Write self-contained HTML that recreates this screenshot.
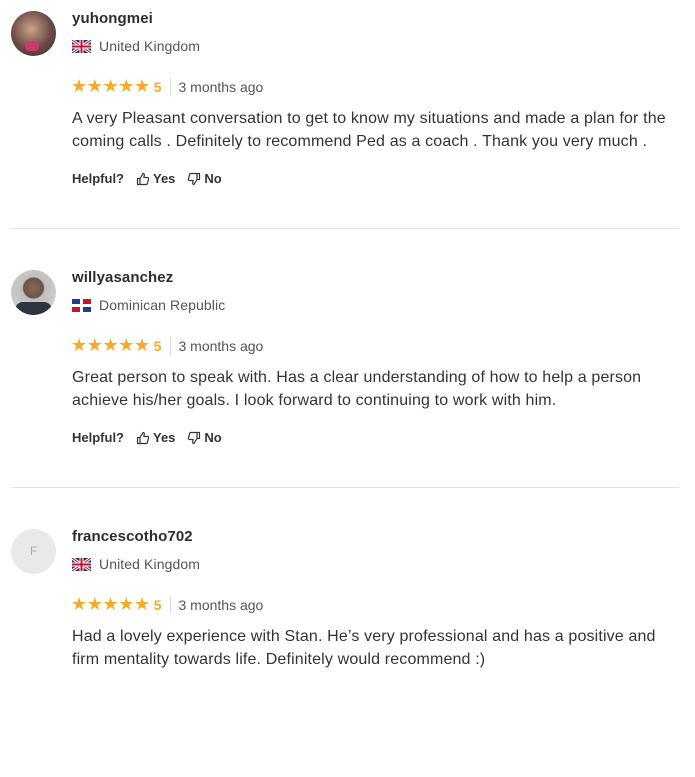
<!DOCTYPE html>
<html><head><meta charset="utf-8"><style>
body{margin:0;width:695px;height:677px;background:#fff;font-family:"Liberation Sans",Arial,sans-serif;color:#2d2d2d;overflow:hidden;position:relative}
.r{position:absolute;left:0;width:695px;height:259px}
.av{position:absolute;left:11px;top:11px;width:45px;height:45px;border-radius:50%;overflow:hidden}
.name{position:absolute;left:72px;top:10px;font-size:15px;font-weight:bold;color:#2d2d2d;letter-spacing:0.1px}
.ctry{position:absolute;left:72px;top:38px;font-size:14px;color:#555;display:flex;align-items:center;letter-spacing:0.1px}
.flag{width:19px;height:13px;margin-right:8px;display:inline-block}
.stars{position:absolute;left:71px;top:76px;display:flex;align-items:center;font-size:14px}
.st{color:#f7a92b;font-size:18px;letter-spacing:-0.4px;}
.five{color:#f7a92b;font-weight:bold;margin-left:4px}
.sep{width:1px;height:18px;background:#ddd;margin:0 7px 0 9px}
.ago{color:#555}
.txt{position:absolute;left:72px;top:107px;width:598px;font-size:16px;line-height:23px;color:#333;letter-spacing:0.15px}
.help{position:absolute;left:72px;top:171px;font-size:13px;font-weight:bold;color:#333;display:flex;align-items:center}
.help svg{margin:0 3px 0 12px}
.hr{position:absolute;left:11px;right:16px;top:228px;height:1px;background:#e2e2e2}
</style></head><body>

<svg width="0" height="0" style="position:absolute"><defs>
<symbol id="uk" viewBox="0 0 19 13"><rect width="19" height="13" fill="#24347a"/><path d="M0 0L19 13M19 0L0 13" stroke="#fff" stroke-width="3"/><path d="M0 0L19 13M19 0L0 13" stroke="#c8102e" stroke-width="1"/><path d="M9.5 0V13M0 6.5H19" stroke="#fff" stroke-width="4"/><path d="M9.5 0V13M0 6.5H19" stroke="#c8102e" stroke-width="2"/></symbol>
<symbol id="do" viewBox="0 0 19 13"><rect width="19" height="13" fill="#fff"/><rect width="8" height="5" fill="#1d3f8f"/><rect x="11" y="8" width="8" height="5" fill="#1d3f8f"/><rect x="11" width="8" height="5" fill="#ce1126"/><rect y="8" width="8" height="5" fill="#ce1126"/></symbol>
<symbol id="up" viewBox="0 0 14 14"><path d="M1.5 6.5h2.5v6h-2.5zM4 6.5l3-5c1 0 1.5.7 1.3 1.7L7.8 5.5h3.7c.8 0 1.3.7 1.1 1.4l-1.2 4.6c-.2.6-.7 1-1.3 1H4" fill="none" stroke="#333" stroke-width="1.2" stroke-linejoin="round"/></symbol>
<symbol id="dn" viewBox="0 0 14 14"><g transform="rotate(180 7 7)"><path d="M1.5 6.5h2.5v6h-2.5zM4 6.5l3-5c1 0 1.5.7 1.3 1.7L7.8 5.5h3.7c.8 0 1.3.7 1.1 1.4l-1.2 4.6c-.2.6-.7 1-1.3 1H4" fill="none" stroke="#333" stroke-width="1.2" stroke-linejoin="round"/></g></symbol>
</defs></svg>

<div class="r" style="top:0">
<div class="av" style="background:radial-gradient(circle at 45% 40%,#c9a28a,#6b4a45 55%,#3a2a30);"><div style="position:absolute;left:14px;top:30px;width:14px;height:10px;background:#c83a6a;border-radius:4px"></div></div>
<div class="name">yuhongmei</div>
<div class="ctry"><svg class="flag"><use href="#uk"/></svg>United Kingdom</div>
<div class="stars"><span class="st">★★★★★</span><span class="five">5</span><span class="sep"></span><span class="ago">3 months ago</span></div>
<div class="txt">A very Pleasant conversation to get to know my situations and made a plan for the coming calls . Definitely to recommend Ped as a coach . Thank you very much .</div>
<div class="help">Helpful?<svg width="14" height="14"><use href="#up"/></svg>Yes<svg width="14" height="14"><use href="#dn"/></svg>No</div>
<div class="hr"></div>
</div>

<div class="r" style="top:259px">
<div class="av" style="background:radial-gradient(circle at 50% 40%,#8a6a58 0,#6d5246 28%,#bfbfbf 32%,#d8d8d8);"><div style="position:absolute;left:4px;top:32px;width:37px;height:16px;background:#2e3440;border-radius:8px 8px 0 0"></div></div>
<div class="name">willyasanchez</div>
<div class="ctry"><svg class="flag"><use href="#do"/></svg>Dominican Republic</div>
<div class="stars"><span class="st">★★★★★</span><span class="five">5</span><span class="sep"></span><span class="ago">3 months ago</span></div>
<div class="txt">Great person to speak with. Has a clear understanding of how to help a person achieve his/her goals. I look forward to continuing to work with him.</div>
<div class="help">Helpful?<svg width="14" height="14"><use href="#up"/></svg>Yes<svg width="14" height="14"><use href="#dn"/></svg>No</div>
<div class="hr"></div>
</div>

<div class="r" style="top:518px">
<div class="av" style="background:#e8e9eb;color:#aaa;font-size:12px;text-align:center;line-height:45px">F</div>
<div class="name">francescotho702</div>
<div class="ctry"><svg class="flag"><use href="#uk"/></svg>United Kingdom</div>
<div class="stars"><span class="st">★★★★★</span><span class="five">5</span><span class="sep"></span><span class="ago">3 months ago</span></div>
<div class="txt">Had a lovely experience with Stan. He’s very professional and has a positive and firm mentality towards life. Definitely would recommend :)</div>
</div>

</body></html>
